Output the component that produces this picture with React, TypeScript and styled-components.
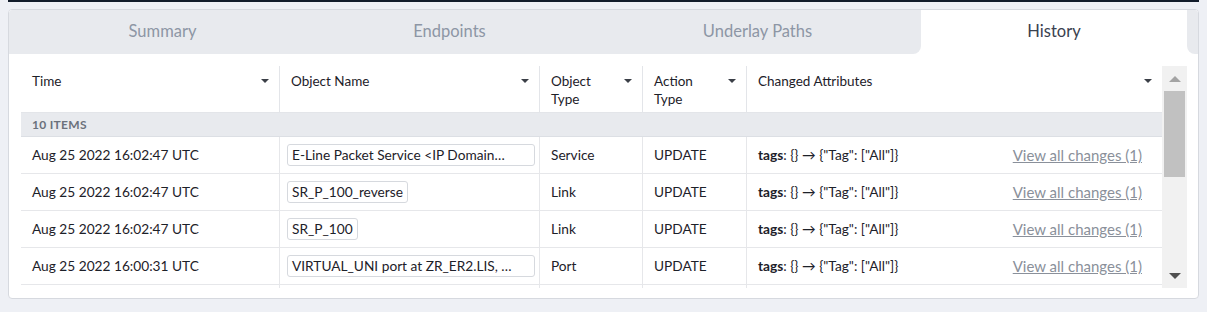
import React from "react";
import styled, {createGlobalStyle} from "styled-components";

const GlobalStyle = createGlobalStyle`
  * {
    box-sizing: border-box;
  }
  body {
    margin: 0 8px;
    background: #eef0f5;
    font-family: Lato, "Noto Sans", sans-serif;
    color: #1d2129;
  }
`

const TopStrip = styled.div`
  height: 2px;
  background: #121c2b;
  margin-bottom: 7px;
`

const Card = styled.div`
  border: 1px solid #d6d9df;
  border-radius: 4px;
  background: #fff;
  overflow: hidden;
  height: 290px;
`

const TabBar = styled.div`
  display: flex;
  height: 44px;
  background: #fff;
`

const TabGap = styled.div<{ $roundLeft?: boolean }>`
  flex: 1;
  background: #e8eaee;
  border-bottom-left-radius: ${p => p.$roundLeft ? "8px" : "0"};
`

const Tab = styled.div<{ $active?: boolean; $roundRight?: boolean; $width: number }>`
  flex: 0 0 ${p => p.$width}px;
  display: flex;
  align-items: center;
  justify-content: center;
  font-size: 16.5px;
  padding-bottom: 2px;
  color: ${p => p.$active ? "#3a4150" : "#8d96a5"};
  background: ${p => p.$active ? "#fff" : "#e8eaee"};
  border-radius: ${p => p.$active ? "9px 9px 0 0" : p.$roundRight ? "0 0 8px 0" : "0"};
  cursor: pointer;
`

const Body = styled.div`
  display: flex;
  padding: 12px 11px 0 12px;
`

const TableWrap = styled.div`
  flex: 1;
  height: 222px;
  overflow: hidden;
`

const cols = "258px 260px 103px 104px 1fr";

const HeaderRow = styled.div`
  display: grid;
  grid-template-columns: ${cols};
  height: 47px;
  border-bottom: 1px solid #e3e5e9;
`

const HeaderCell = styled.div<{ $first?: boolean }>`
  display: flex;
  justify-content: space-between;
  align-items: flex-start;
  padding: 6px 10px 0 11px;
  border-left: ${p => p.$first ? "none" : "1px solid #e3e5e9"};
  font-size: 13.5px;
  line-height: 18px;
`

const Caret = styled.span`
  margin-top: 7px;
  width: 0;
  height: 0;
  border-left: 4px solid transparent;
  border-right: 4px solid transparent;
  border-top: 4px solid #3b3f47;
  flex: none;
`

const GroupRow = styled.div`
  height: 24px;
  background: #e8eaee;
  border-bottom: 1px solid #dcdfe4;
  display: flex;
  align-items: center;
  padding-left: 11px;
  font-size: 12px;
  font-weight: bold;
  letter-spacing: 0.3px;
  color: #6b717c;
`

const Row = styled.div`
  display: grid;
  grid-template-columns: ${cols};
  height: 37px;
  border-bottom: 1px solid #e6e7ea;
`

const Cell = styled.div<{ $first?: boolean }>`
  display: flex;
  align-items: center;
  padding: 0 11px 1px;
  border-left: ${p => p.$first ? "none" : "1px solid #e6e7ea"};
  font-size: 13.7px;
  white-space: nowrap;
  min-width: 0;
`

const NameCell = styled(Cell)`
  padding: 0 4px 1px 7px;
`

const Chip = styled.span<{ $full?: boolean }>`
  display: inline-block;
  max-width: 100%;
  width: ${p => p.$full ? "100%" : "auto"};
  height: 22px;
  line-height: 20px;
  padding: 0 4px;
  border: 1px solid #d6d9de;
  border-radius: 3px;
  overflow: hidden;
  text-overflow: ellipsis;
  white-space: nowrap;
`

const ChangeCell = styled(Cell)`
  justify-content: space-between;
  padding-right: 20px;
`

const Change = styled.span`
  b {
    font-weight: bold;
  }
`

const ViewLink = styled.a`
  font-size: 15px;
  color: #8a909a;
  text-decoration: underline;
  cursor: pointer;
`

const Scrollbar = styled.div`
  width: 25px;
  height: 222px;
  flex: none;
  background: #f1f1f1;
  display: flex;
  flex-direction: column;
  align-items: center;
`

const ArrowBox = styled.div`
  height: 25px;
  width: 100%;
  display: flex;
  align-items: center;
  justify-content: center;
`

const ArrowUp = styled.span`
  width: 0;
  height: 0;
  border-left: 6px solid transparent;
  border-right: 6px solid transparent;
  border-bottom: 6px solid #a3a3a3;
`

const ArrowDown = styled.span`
  width: 0;
  height: 0;
  border-left: 6px solid transparent;
  border-right: 6px solid transparent;
  border-top: 6px solid #505050;
`

const Track = styled.div`
  flex: 1;
  width: 100%;
  padding: 0 2px;
`

const Thumb = styled.div`
  height: 86px;
  background: #c1c1c1;
`

type HistoryItem = {
    time: string;
    name: string;
    long?: boolean;
    type: string;
    action: string;
}

const items: HistoryItem[] = [
    {time: "Aug 25 2022 16:02:47 UTC", name: "E-Line Packet Service <IP Domain…", long: true, type: "Service", action: "UPDATE"},
    {time: "Aug 25 2022 16:02:47 UTC", name: "SR_P_100_reverse", type: "Link", action: "UPDATE"},
    {time: "Aug 25 2022 16:02:47 UTC", name: "SR_P_100", type: "Link", action: "UPDATE"},
    {time: "Aug 25 2022 16:00:31 UTC", name: "VIRTUAL_UNI port at ZR_ER2.LIS, …", long: true, type: "Port", action: "UPDATE"},
    {time: "Aug 25 2022 16:00:31 UTC", name: "VIRTUAL_UNI port at ZR_ER1.LIS", type: "Port", action: "UPDATE"},
];

const tabs = [
    {label: "Summary", width: 285},
    {label: "Endpoints", width: 289},
    {label: "Underlay Paths", width: 327},
    {label: "History", width: 266},
];
const activeTab = 3;

const App: React.FC = () => {
    return (
        <>
            <GlobalStyle/>
            <TopStrip/>
            <Card>
                <TabBar>
                    <TabGap/>
                    {tabs.map((tab, i) => (
                        <Tab key={tab.label} $width={tab.width} $active={i === activeTab}
                             $roundRight={i === activeTab - 1}>
                            {tab.label}
                        </Tab>
                    ))}
                    <TabGap $roundLeft/>
                </TabBar>
                <Body>
                    <TableWrap>
                        <HeaderRow>
                            <HeaderCell $first>Time<Caret/></HeaderCell>
                            <HeaderCell>Object Name<Caret/></HeaderCell>
                            <HeaderCell>Object<br/>Type<Caret/></HeaderCell>
                            <HeaderCell>Action<br/>Type<Caret/></HeaderCell>
                            <HeaderCell>Changed Attributes<Caret/></HeaderCell>
                        </HeaderRow>
                        <GroupRow>10 ITEMS</GroupRow>
                        {items.map((item, i) => (
                            <Row key={i}>
                                <Cell $first>{item.time}</Cell>
                                <NameCell><Chip $full={item.long}>{item.name}</Chip></NameCell>
                                <Cell>{item.type}</Cell>
                                <Cell>{item.action}</Cell>
                                <ChangeCell>
                                    <Change><b>tags</b>: {"{}"} → {'{"Tag": ["All"]}'}</Change>
                                    <ViewLink>View all changes (1)</ViewLink>
                                </ChangeCell>
                            </Row>
                        ))}
                    </TableWrap>
                    <Scrollbar>
                        <ArrowBox><ArrowUp/></ArrowBox>
                        <Track><Thumb/></Track>
                        <ArrowBox><ArrowDown/></ArrowBox>
                    </Scrollbar>
                </Body>
            </Card>
        </>
    )
}

export default App;
